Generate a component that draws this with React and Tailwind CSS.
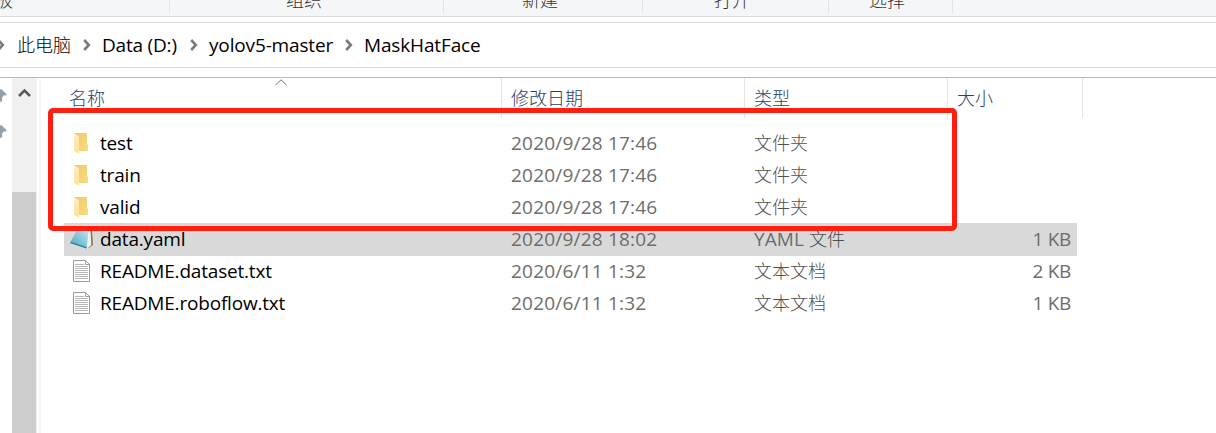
import React from "react";

const LATIN = "font-['Open_Sans','Noto_Sans_CJK_SC',sans-serif]";
const CJK = "font-['Noto_Sans_CJK_SC',sans-serif] text-[18px] tracking-normal font-light";

function Chevron({ className = "" }) {
  return (
    <svg className={"shrink-0 " + className} width="8" height="12" viewBox="0 0 8 12" fill="none" stroke="#7b7b7b" strokeWidth="2.6">
      <path d="M1.2 1l4.6 5-4.6 5" />
    </svg>
  );
}

function FolderIcon() {
  return (
    <svg width="24" height="24" viewBox="0 0 24 24">
      <defs>
        <linearGradient id="folderBack" x1="0" x2="1" y1="0" y2="1">
          <stop offset="0" stopColor="#edca70" />
          <stop offset="1" stopColor="#fadb80" />
        </linearGradient>
        <linearGradient id="folderFlap" x1="0" x2="0" y1="0" y2="1">
          <stop offset="0" stopColor="#ffefba" />
          <stop offset="1" stopColor="#fde09a" />
        </linearGradient>
      </defs>
      <path d="M4.5 2H17v11.5h1V20H8z" fill="url(#folderBack)" />
      <path d="M4 2l5 3.2V22.8L4 20z" fill="url(#folderFlap)" />
    </svg>
  );
}

function NotebookIcon() {
  return (
    <svg width="24" height="24" viewBox="0 0 24 24">
      <defs>
        <linearGradient id="cover" x1="0" x2="1" y1="1" y2="0">
          <stop offset="0" stopColor="#4aa3be" />
          <stop offset="1" stopColor="#c2e9f2" />
        </linearGradient>
      </defs>
      <path d="M18 2l4 1 1 15-5 3.5z" fill="#8a7550" />
      <path d="M18 2l2.5 1 .8 15-4.3 4z" fill="#f1f1eb" />
      <path d="M8 1l10.5 1.5L16.5 21.5 0 16z" fill="url(#cover)" />
      <path d="M0 16l16.5 5.5.2-1.5L1 14.8z" fill="#3a87a2" />
    </svg>
  );
}

function TextIcon() {
  return (
    <svg width="24" height="24" viewBox="0 0 24 24">
      <path d="M3.5 1.5h12l4 4v17h-16z" fill="#fff" stroke="#9a9a9a" />
      <path d="M15.5 1.5v4h4" fill="none" stroke="#9a9a9a" />
      <path d="M5 5.5h9M5 7.5h13M5 9.5h13M5 11.5h13M5 13.5h13M5 15.5h13M5 17.5h13M5 19.5h13" stroke="#b8b8b8" />
    </svg>
  );
}

function Pin() {
  return (
    <svg width="8" height="16" viewBox="0 0 8 16" fill="#95a0a8">
      <path d="M0 1.5L1.2 1l5.6 5.2-.8 1.3-2-.3L2 9.7l.2 3L1 14.2l-1-1z" />
    </svg>
  );
}

const files = [
  { icon: FolderIcon, name: "test", date: "2020/9/28 17:46", type: "文件夹", size: "" },
  { icon: FolderIcon, name: "train", date: "2020/9/28 17:46", type: "文件夹", size: "" },
  { icon: FolderIcon, name: "valid", date: "2020/9/28 17:46", type: "文件夹", size: "" },
  { icon: NotebookIcon, name: "data.yaml", date: "2020/9/28 18:02", prefix: "YAML ", type: "文件", size: "1 KB", selected: true },
  { icon: TextIcon, name: "README.dataset.txt", date: "2020/6/11 1:32", type: "文本文档", size: "2 KB" },
  { icon: TextIcon, name: "README.roboflow.txt", date: "2020/6/11 1:32", type: "文本文档", size: "1 KB" },
];

function FileRow({ icon: Icon, name, date, prefix, type, size, selected }) {
  return (
    <div className={"flex w-[1013px] items-start " + (selected ? "-mb-px h-[33px] bg-[#d9d9d9]" : "h-8")}>
      <div className="flex w-[447px] items-center">
        <div className="ml-[6px] w-[30px]"><Icon /></div>
        <span className="tracking-[-0.19px] text-black">{name}</span>
      </div>
      <span className="w-[243px] tracking-[0.2px]">{date}</span>
      <span className="-mt-px w-[193px] tracking-[0.1px]">{prefix}<span className={CJK + " text-[#505050]"}>{type}</span></span>
      <span className="flex-1 pr-[6px] text-right tracking-[-0.3px]">{size}</span>
    </div>
  );
}

export default function App() {
  return (
    <div className={"relative flex h-[433px] w-[1216px] flex-col overflow-hidden bg-white text-[19px] leading-8 whitespace-pre text-[#6d6d6d] " + LATIN}>
      <div className="flex h-[17px] shrink-0 border-b border-[#dadbdc] bg-[#f5f6f7] font-['Noto_Sans_CJK_SC',sans-serif] text-[18px] font-light text-[#333]">
        <div className="h-[13px] w-[170px] border-r border-[#e2e3e4]"><div className="-mt-[17px] -ml-[5px]">板</div></div>
        <div className="h-[13px] w-[274px] border-r border-[#e2e3e4]"><div className="-mt-[17px] ml-[116px]">组织</div></div>
        <div className="h-[13px] w-[199px] border-r border-[#e2e3e4]"><div className="-mt-[17px] ml-[78px]">新建</div></div>
        <div className="h-[13px] w-[186px] border-r border-[#e2e3e4]"><div className="-mt-[17px] ml-[71px]">打开</div></div>
        <div className="h-[13px] w-[124px] border-r border-[#e2e3e4]"><div className="-mt-[17px] ml-[40px]">选择</div></div>
      </div>
      <div className="mt-[5px] flex h-[46px] shrink-0 items-center border-y border-[#d9d9d9] text-black">
        <Chevron className="-ml-[3px]" />
        <span className={"ml-[12px] w-[54px] -translate-y-px " + CJK}>此电脑</span>
        <Chevron className="mr-[11px] ml-[12px]" />
        <span className="w-[76px] tracking-[-0.2px]">Data (D:)</span>
        <Chevron className="mr-[11px] ml-[12px]" />
        <span className="w-[125px] tracking-[-0.15px]">yolov5-master</span>
        <Chevron className="mr-[11px] ml-[11px]" />
        <span className="tracking-[-0.15px]">MaskHatFace</span>
      </div>
      <div className="mt-[9px] flex flex-1 border-t border-[#bdbdbd]">
        <div className="flex w-[12px] flex-col gap-[20px] pt-[10px]"><Pin /><Pin /></div>
        <div className="flex w-[25px] flex-col bg-[#f0f0f0]">
          <svg className="mt-[10px] ml-[6px]" width="13" height="10" viewBox="0 0 13 10" fill="none" stroke="#5a5a5a" strokeWidth="2.6"><path d="M1 8l5.5-5.5L12 8" /></svg>
          <div className="mt-[94px] w-6 flex-1 bg-[#cdcdcd]" />
        </div>
        <div className="ml-[2px] flex flex-1 flex-col border-l-2 border-[#f6f6f6] pl-[23px]">
          <div className="flex h-[40px] font-['Noto_Sans_CJK_SC',sans-serif] text-[18px] leading-[39px] font-light text-[#2a4266]">
            <div className="flex w-[438px] border-r border-[#e5e5e5] pl-[5px]">
              <span className="w-[206px]">名称</span>
              <svg className="mt-px" width="12" height="7" viewBox="0 0 12 7" fill="none" stroke="#777"><path d="M.5 6L6 .8 11.5 6" /></svg>
            </div>
            <div className="w-[243px] border-r border-[#e5e5e5] pl-[9px]">修改日期</div>
            <div className="w-[203px] border-r border-[#e5e5e5] pl-[9px]">类型</div>
            <div className="w-[135px] border-r border-[#e5e5e5] pl-[9px]">大小</div>
          </div>
          <div className="mt-[9px] flex flex-col">
            {files.map((f) => <FileRow key={f.name} {...f} />)}
          </div>
        </div>
      </div>
      <div className="absolute top-[108px] left-[48px] h-[123px] w-[909px] rounded-[5px] border-5 border-[#ff1f10]" />
    </div>
  );
}
